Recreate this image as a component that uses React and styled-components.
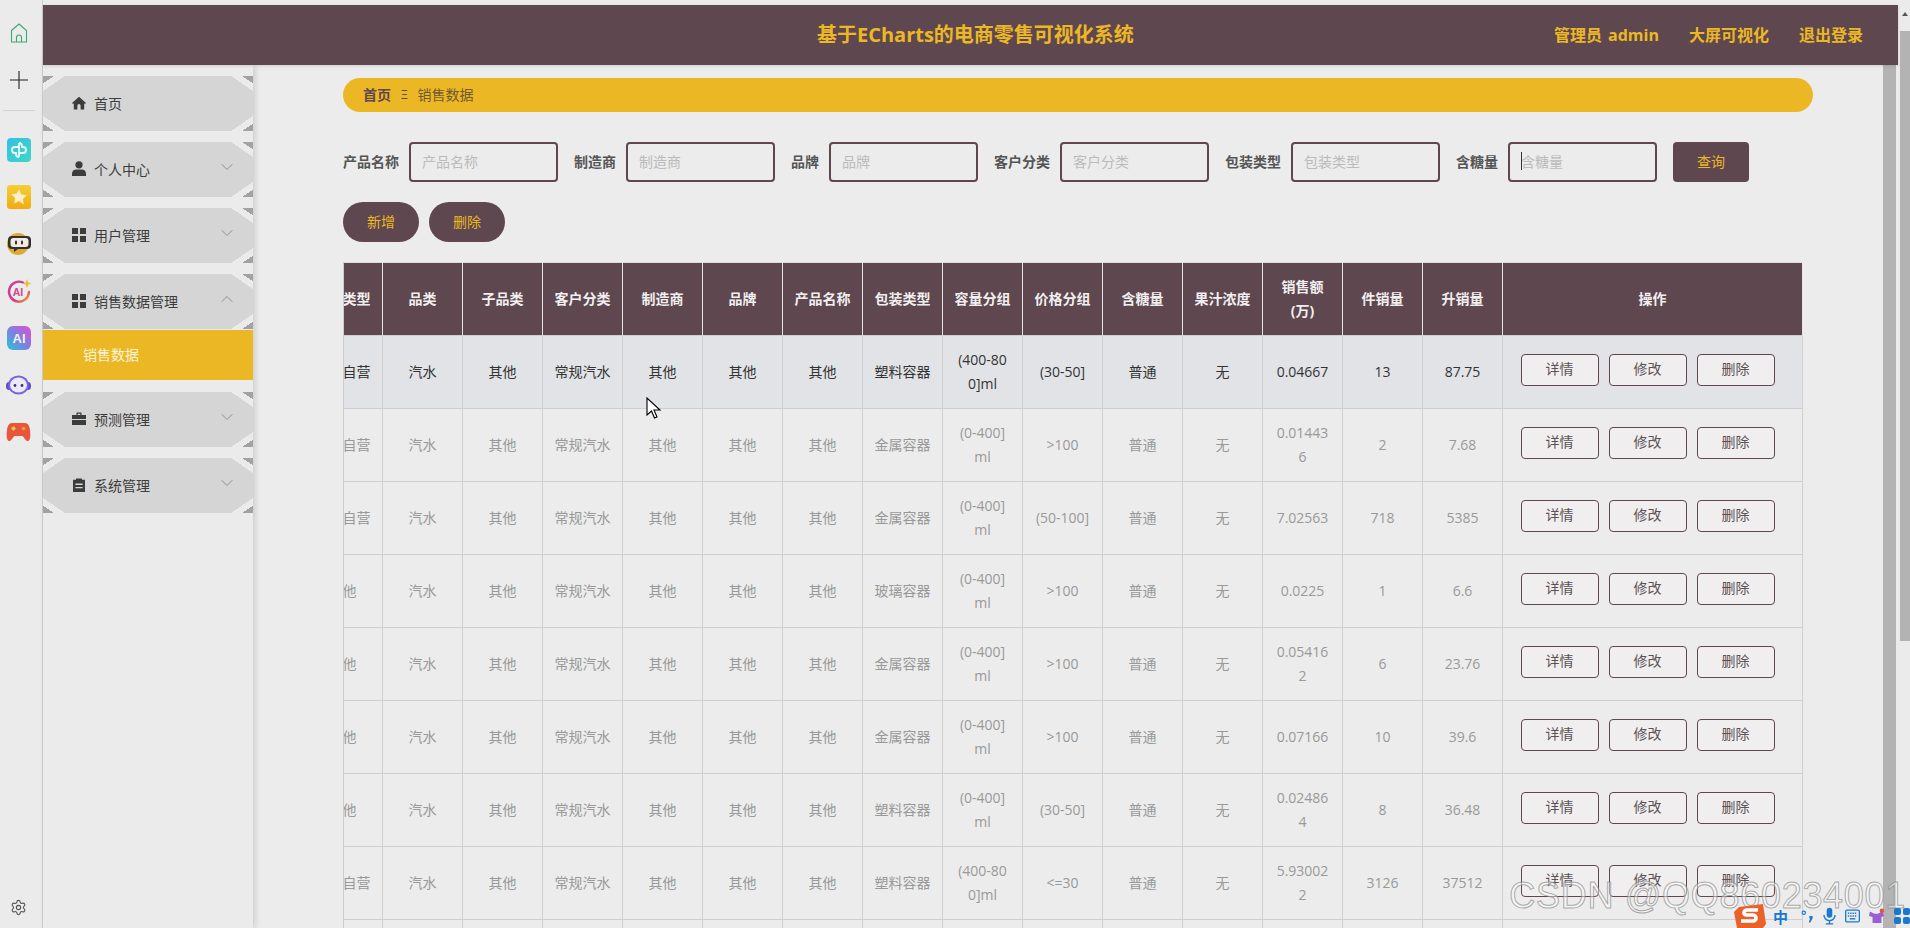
import React from 'react';
import styled, { createGlobalStyle } from 'styled-components';
import { ChevronDown, ChevronUp, Settings } from 'lucide-react';

const GlobalStyle = createGlobalStyle`
  html, body {
    margin: 0;
    height: 100%;
    overflow: hidden;
    background: #ebebeb;
    font-family: "Open Sans", "Noto Sans CJK SC", sans-serif;
    font-size: 14px;
  }
  * { box-sizing: border-box; }
`;

const BROWN = '#5e474f';
const YELLOW = '#ecb725';

const columns = ['渠道类型', '品类', '子品类', '客户分类', '制造商', '品牌', '产品名称', '包装类型', '容量分组', '价格分组', '含糖量', '果汁浓度', '销售额(万)', '件销量', '升销量'];

const rows = [
  ['线上自营', '塑料容器', '(400-800]ml', '(30-50]', '0.04667', '13', '87.75'],
  ['线上自营', '金属容器', '(0-400]ml', '>100', '0.014436', '2', '7.68'],
  ['线上自营', '金属容器', '(0-400]ml', '(50-100]', '7.02563', '718', '5385'],
  ['其他', '玻璃容器', '(0-400]ml', '>100', '0.0225', '1', '6.6'],
  ['其他', '金属容器', '(0-400]ml', '>100', '0.054162', '6', '23.76'],
  ['其他', '金属容器', '(0-400]ml', '>100', '0.07166', '10', '39.6'],
  ['其他', '塑料容器', '(0-400]ml', '(30-50]', '0.024864', '8', '36.48'],
  ['线上自营', '塑料容器', '(400-800]ml', '<=30', '5.930022', '3126', '37512'],
  ['线上自营', '塑料容器', '(0-400]ml', '>100', '0.0312', '4', '12.5'],
];

const fields = [
  { label: '产品名称' },
  { label: '制造商' },
  { label: '品牌' },
  { label: '客户分类' },
  { label: '包装类型' },
  { label: '含糖量', focused: true },
];

const HomeGlyph = () => (
  <svg width="14" height="14" viewBox="0 0 14 14" fill="#3c3c3c">
    <path d="M7 .8 14 7l-.9 1-.9-.7V13.600H8.600V9.600a1.600 1.600 0 0 0-3.200 0v4H1.800V7.300L.9 8 0 7z" />
  </svg>
);

const UserGlyph = () => (
  <svg width="14" height="15" viewBox="0 0 14 15" fill="#3c3c3c">
    <circle cx="7" cy="3.800" r="3.600" />
    <path d="M0 15v-2.600C0 10 2.200 8.600 4 8.600h6c1.800 0 4 1.400 4 3.800V15z" />
  </svg>
);

const GridGlyph = () => (
  <svg width="14" height="14" viewBox="0 0 14 14" fill="#3c3c3c">
    <rect width="6" height="6" />
    <rect x="8" width="6" height="6" />
    <rect y="8" width="6" height="6" />
    <rect x="8" y="8" width="6" height="6" />
  </svg>
);

const CaseGlyph = () => (
  <svg width="14" height="13" viewBox="0 0 14 13" fill="#3c3c3c">
    <path d="M4.500 3V.6h5V3H8.300V1.800H5.700V3z" />
    <path d="M0 3h14v4H0zM0 8h14v5H0z" />
  </svg>
);

const ClipGlyph = () => (
  <svg width="14" height="14" viewBox="0 0 14 14" fill="#3c3c3c">
    <path d="M1 1.800h3V.4h6v1.400h3V14H1zM3.400 5.600v1.300h7.200V5.600zM3.400 9v1.300h7.200V9z" fillRule="evenodd" />
  </svg>
);

const menu = [
  { label: '首页', icon: <HomeGlyph /> },
  { label: '个人中心', icon: <UserGlyph />, arrow: 'down' },
  { label: '用户管理', icon: <GridGlyph />, arrow: 'down' },
  { label: '销售数据管理', icon: <GridGlyph />, arrow: 'up', children: ['销售数据'] },
  { label: '预测管理', icon: <CaseGlyph />, arrow: 'down' },
  { label: '系统管理', icon: <ClipGlyph />, arrow: 'down' },
];

const appIcons = [
  (
    <svg width="24" height="24" viewBox="0 0 24 24">
      <defs>
        <linearGradient id="tealTile" x1="0" y1="0" x2="1" y2="1">
          <stop offset="0" stopColor="#35bfe6" />
          <stop offset="1" stopColor="#3fd6c6" />
        </linearGradient>
      </defs>
      <rect width="24" height="24" rx="4" fill="url(#tealTile)" />
      <path d="M12 5a3 3 0 0 1 3 3v1h1a3 3 0 0 1 0 6h-4M12 19a3 3 0 0 1-3-3v-1H8a3 3 0 0 1 0-6h4M12 5v14" fill="none" stroke="#fff" strokeWidth="1.800" opacity=".9" />
    </svg>
  ),
  (
    <svg width="24" height="24" viewBox="0 0 24 24">
      <defs>
        <linearGradient id="starTile" x1="0" y1="0" x2="0" y2="1">
          <stop offset="0" stopColor="#f3cf35" />
          <stop offset="1" stopColor="#f2ab12" />
        </linearGradient>
      </defs>
      <rect width="24" height="24" rx="3" fill="url(#starTile)" />
      <path d="m12 4.500 2.400 4.900 5.400.8-3.900 3.800.9 5.400L12 16l-4.800 2.400.9-5.400-3.900-3.800 5.400-.8z" fill="#fbeecb" />
    </svg>
  ),
  (
    <svg width="24" height="24" viewBox="0 0 24 24">
      <circle cx="11" cy="12" r="11" fill="#dcaa35" />
      <path d="M5 4h15a4 4 0 0 1 4 4v5a4 4 0 0 1-4 4h-9l-4 3v-3H5a4 4 0 0 1-4-4V8a4 4 0 0 1 4-4z" fill="#33302f" />
      <rect x="3.500" y="6" width="18" height="9" rx="3" fill="#f1ecdf" />
      <rect x="8" y="8.500" width="2" height="4" rx="1" fill="#33302f" />
      <rect x="14" y="8.500" width="2" height="4" rx="1" fill="#33302f" />
    </svg>
  ),
  (
    <svg width="26" height="26" viewBox="0 0 26 26">
      <defs>
        <linearGradient id="aiRing" x1="0" y1="0" x2="1" y2="1">
          <stop offset="0" stopColor="#c53f9f" />
          <stop offset=".6" stopColor="#d63e7e" />
          <stop offset="1" stopColor="#e6a52b" />
        </linearGradient>
      </defs>
      <path d="M17 4.500A10 10 0 1 0 23 14" fill="none" stroke="url(#aiRing)" strokeWidth="2.400" strokeLinecap="round" />
      <text x="12" y="18" fontSize="10.500" fontWeight="700" textAnchor="middle" fill="#d2478d" fontFamily="Liberation Sans, sans-serif">AI</text>
      <path d="m21 1 1.200 3.300L25.500 5.500l-3.300 1.200L21 10l-1.200-3.300-3.300-1.200 3.300-1.200z" fill="#eebd3a" />
    </svg>
  ),
  (
    <svg width="24" height="24" viewBox="0 0 24 24">
      <defs>
        <linearGradient id="aiTile" x1="1" y1="0" x2="0" y2="1">
          <stop offset="0" stopColor="#e64fcf" />
          <stop offset=".5" stopColor="#7f7fe0" />
          <stop offset="1" stopColor="#28c3d8" />
        </linearGradient>
      </defs>
      <rect width="24" height="24" rx="6" fill="url(#aiTile)" />
      <text x="12" y="17" fontSize="13" fontWeight="700" textAnchor="middle" fill="#eef3ff" fontFamily="Liberation Sans, sans-serif">AI</text>
    </svg>
  ),
  (
    <svg width="25" height="20" viewBox="0 0 25 20">
      <ellipse cx="3" cy="11" rx="3" ry="4" fill="#5a4bc9" />
      <ellipse cx="22" cy="11" rx="3" ry="4" fill="#5a4bc9" />
      <ellipse cx="12.500" cy="10" rx="10.500" ry="9.500" fill="#7a63e0" />
      <ellipse cx="12.500" cy="10" rx="8.500" ry="7.500" fill="#ece9fb" />
      <circle cx="9" cy="10.500" r="1.400" fill="#3a3466" />
      <circle cx="16" cy="10.500" r="1.400" fill="#3a3466" />
    </svg>
  ),
  (
    <svg width="25" height="20" viewBox="0 0 25 20">
      <path d="M6 1h13c3 0 4.500 3 5 7 .6 5 .6 10-1.800 11-2 .8-3.500-3-5.700-5H8.500c-2.200 2-3.700 5.800-5.700 5C.4 18 .4 13 1 8c.5-4 2-7 5-7z" fill="#e6553c" />
      <path d="M7.500 4.500v4M5.500 6.500h4" stroke="#f3c93f" strokeWidth="1.800" />
      <circle cx="17.500" cy="6.500" r="1.800" fill="#f0a13b" />
    </svg>
  ),
];

const App = () => (
  <Shell>
    <GlobalStyle />
    <Rail>
      <RailSlot>
        <svg width="18" height="20" viewBox="0 0 18 20" fill="none" stroke="#3aa974" strokeWidth="1.100">
          <path d="M1.500 7.500 9 1l7.500 6.500V19h-15z" />
          <path d="M6.500 19v-4.500a2.500 2.500 0 0 1 5 0V19" />
        </svg>
      </RailSlot>
      <RailSlot>
        <svg width="18" height="18" viewBox="0 0 18 18" stroke="#222" strokeWidth="1.100">
          <path d="M9 0v18M0 9h18" />
        </svg>
      </RailSlot>
      <RailLine />
      {appIcons.map((icon, i) => <RailSlot key={i}>{icon}</RailSlot>)}
      <RailBottom><Settings size={17} color="#555" strokeWidth={1.6} /></RailBottom>
    </Rail>

    <Window>
      <TopBar>
        <Title>基于ECharts的电商零售可视化系统</Title>
        <TopLinks>
          <span>管理员 admin</span>
          <span>大屏可视化</span>
          <span>退出登录</span>
        </TopLinks>
      </TopBar>

      <Body>
        <Sidebar>
          {menu.map((item) => (
            <React.Fragment key={item.label}>
              <MenuItem>
                <MenuIcon>{item.icon}</MenuIcon>
                <MenuLabel>{item.label}</MenuLabel>
                {item.arrow === 'down' && <MenuArrow><ChevronDown size={20} strokeWidth={0.9} /></MenuArrow>}
                {item.arrow === 'up' && <MenuArrow><ChevronUp size={20} strokeWidth={0.9} /></MenuArrow>}
              </MenuItem>
              {item.children && item.children.map((c) => <SubItem key={c}>{c}</SubItem>)}
            </React.Fragment>
          ))}
        </Sidebar>

        <Content>
          <Crumbs>
            <strong>首页</strong>
            <CrumbSep>Ξ</CrumbSep>
            <span>销售数据</span>
          </Crumbs>

          <SearchForm>
            {fields.map((f) => (
              <Field key={f.label}>
                <FieldLabel>{f.label}</FieldLabel>
                <InputWrap $focused={f.focused}>
                  <SearchInput placeholder={f.label} readOnly />
                </InputWrap>
              </Field>
            ))}
            <QueryBtn type="button">查询</QueryBtn>
          </SearchForm>

          <Actions>
            <PillBtn type="button">新增</PillBtn>
            <PillBtn type="button">删除</PillBtn>
          </Actions>

          <TableWrap>
            <DataTable>
              <colgroup>
                {columns.map((c) => <col key={c} width="80" />)}
                <col width="300" />
              </colgroup>
              <thead>
                <tr>
                  {columns.map((c) => <Th key={c}>{c}</Th>)}
                  <Th>操作</Th>
                </tr>
              </thead>
              <tbody>
                {rows.map((r, i) => (
                  <Row key={i} $hover={i === 0}>
                    <Td>{r[0]}</Td>
                    <Td>汽水</Td>
                    <Td>其他</Td>
                    <Td>常规汽水</Td>
                    <Td>其他</Td>
                    <Td>其他</Td>
                    <Td>其他</Td>
                    <Td>{r[1]}</Td>
                    <Td>{r[2]}</Td>
                    <Td>{r[3]}</Td>
                    <Td>普通</Td>
                    <Td>无</Td>
                    <Td>{r[4]}</Td>
                    <Td>{r[5]}</Td>
                    <Td>{r[6]}</Td>
                    <Td>
                      <RowActions>
                        <RowBtn type="button">详情</RowBtn>
                        <RowBtn type="button">修改</RowBtn>
                        <RowBtn type="button">删除</RowBtn>
                      </RowActions>
                    </Td>
                  </Row>
                ))}
              </tbody>
            </DataTable>
          </TableWrap>
        </Content>

        <InnerScroll />
      </Body>
    </Window>

    <OuterScroll>
      <ScrollArrow />
      <ScrollThumb />
    </OuterScroll>

    <Pointer width="16" height="24" viewBox="0 0 16 24">
      <path d="M1 1v17l4.500-4 3 7 2.500-1-3-7h6z" fill="#fff" stroke="#000" strokeWidth="1.100" />
    </Pointer>

    <Watermark>CSDN @QQ860234001</Watermark>

    <ImeBar>
      <ImeLogo width="32" height="24" viewBox="0 0 32 24">
        <path d="M5 3 29 0l3 20-3 4H3L0 8z" fill="#e9622a" />
        <path d="M24 6H13c-4 0-4 5 0 5h6c4 0 4 6 0 6H7" fill="none" stroke="#fff" strokeWidth="3.600" />
      </ImeLogo>
      <ImeChar>中</ImeChar>
      <svg width="13" height="14" viewBox="0 0 14 14" fill="#1b78d0">
        <circle cx="3" cy="3.500" r="1.800" fill="none" stroke="#1b78d0" strokeWidth="1.200" />
        <path d="M9 7h3.500v2.500L10 14H8.300l1.500-4.500H9z" />
      </svg>
      <svg width="13" height="18" viewBox="0 0 14 18" fill="#1b78d0">
        <rect x="4" width="6" height="11" rx="3" />
        <path d="M1 8a6 6 0 0 0 12 0M7 14v4M3 17.500h8" fill="none" stroke="#1b78d0" strokeWidth="1.500" />
      </svg>
      <svg width="15" height="14" viewBox="0 0 16 14">
        <rect x=".7" y=".7" width="14.600" height="12.600" rx="1.500" fill="none" stroke="#1b78d0" strokeWidth="1.400" />
        <path d="M3 4h10M3 7h10" stroke="#1b78d0" strokeWidth="1.500" strokeDasharray="1.500 1" />
        <path d="M5 10h6" stroke="#1b78d0" strokeWidth="1.500" />
      </svg>
      <svg width="16" height="18" viewBox="0 0 18 18">
        <path d="M1 4 6 6.500h4L15 4l2 5-3 1v7H4v-7L0 9z" fill="#9a5fd0" />
        <circle cx="14.500" cy="3" r="2.500" fill="#e8503f" />
      </svg>
      <svg width="16" height="16" viewBox="0 0 16 16" fill="#1b78d0">
        <rect width="7" height="7" rx="2" />
        <rect x="9" width="7" height="7" rx="2" />
        <rect y="9" width="7" height="7" rx="2" />
        <rect x="9" y="9" width="7" height="7" rx="2" />
      </svg>
    </ImeBar>
  </Shell>
);

const Shell = styled.div`
  position: relative;
  display: flex;
  width: 1910px;
  height: 928px;
  overflow: hidden;
  background: #ebebeb;
`;

const Rail = styled.aside`
  display: flex;
  flex-direction: column;
  align-items: center;
  flex: 0 0 43px;
  padding: 9.5px 5px 0 0;
  border-right: 1px solid #cfcfcf;
`;

const RailSlot = styled.div`
  display: flex;
  align-items: center;
  justify-content: center;
  flex: 0 0 47px;
  width: 37px;
`;

const RailLine = styled.div`
  flex: 0 0 1px;
  width: 32px;
  margin: 6px 0 16px;
  background: #d4d4d4;
`;

const RailBottom = styled.div`
  display: flex;
  margin-top: auto;
  padding-bottom: 12px;
`;

const Window = styled.div`
  display: flex;
  flex-direction: column;
  flex: 1;
  min-width: 0;
  padding-top: 5px;
`;

const TopBar = styled.header`
  position: relative;
  z-index: 2;
  display: flex;
  align-items: center;
  flex: 0 0 60px;
  padding: 0 35px 0 774px;
  background: ${BROWN};
  color: ${YELLOW};
  box-shadow: 0 1px 3px rgba(0, 0, 0, 0.12);
`;

const Title = styled.h1`
  margin: 0;
  font-size: 20px;
  font-weight: 700;
  line-height: 1;
`;

const TopLinks = styled.nav`
  display: flex;
  gap: 30px;
  margin-left: auto;
  padding-bottom: 2px;
  font-size: 16px;
  font-weight: 700;
  word-spacing: 2px;
`;

const Body = styled.div`
  display: flex;
  flex: 1;
  min-height: 0;
`;

const Sidebar = styled.nav`
  position: relative;
  z-index: 1;
  flex: 0 0 210px;
  padding-top: 11px;
  background: #ebebeb;
  box-shadow: 2px 0 6px rgba(0, 0, 0, 0.14);
`;

const MenuItem = styled.div`
  display: flex;
  align-items: center;
  height: 55px;
  margin-bottom: 11px;
  padding: 0 16px 2px 29px;
  color: #3c3c3c;
  background-color: #d5d5d5;
  background-image:
    linear-gradient(to bottom right, #a2a2a2 25%, #ebebeb 25% 50%, transparent 50%),
    linear-gradient(to bottom left, #a2a2a2 25%, #ebebeb 25% 50%, transparent 50%),
    linear-gradient(to top right, #a2a2a2 25%, #ebebeb 25% 50%, transparent 50%),
    linear-gradient(to top left, #a2a2a2 25%, #ebebeb 25% 50%, transparent 50%);
  background-size: 22px 15px;
  background-repeat: no-repeat;
  background-position: left top, right top, left bottom, right bottom;
`;

const MenuIcon = styled.span`
  display: flex;
  align-items: center;
  justify-content: center;
  width: 14px;
  margin-right: 8px;
`;

const MenuLabel = styled.span`
  flex: 1;
`;

const MenuArrow = styled.span`
  display: flex;
  margin-top: -4px;
  color: #777;
`;

const SubItem = styled.div`
  display: flex;
  align-items: center;
  height: 50px;
  margin: -10px 0 12px;
  padding: 0 0 2px 40px;
  background: ${YELLOW};
  color: #fdf4da;
`;

const Content = styled.main`
  flex: 1;
  min-width: 0;
  padding: 13px 70px 0 90px;
  overflow: hidden;
  background: #ececec;
`;

const Crumbs = styled.div`
  display: flex;
  align-items: center;
  height: 34px;
  padding: 0 0 2px 20px;
  border-radius: 17px;
  background: ${YELLOW};
  color: #6f5a32;
  strong { color: ${BROWN}; font-weight: 700; }
`;

const CrumbSep = styled.span`
  margin: 0 10px;
  color: ${BROWN};
  font-size: 12px;
`;

const SearchForm = styled.form`
  display: flex;
  align-items: center;
  gap: 16px;
  margin-top: 30px;
`;

const Field = styled.label`
  display: flex;
  align-items: center;
  gap: 10px;
`;

const FieldLabel = styled.span`
  padding-bottom: 2px;
  color: #555;
  font-weight: 700;
  white-space: nowrap;
`;

const InputWrap = styled.span`
  position: relative;
  display: block;
  &::after {
    content: '';
    display: ${(p) => (p.$focused ? 'block' : 'none')};
    position: absolute;
    left: 13px;
    top: 10px;
    width: 1px;
    height: 18px;
    background: #333;
  }
`;

const SearchInput = styled.input`
  display: block;
  width: 149px;
  height: 40px;
  padding: 0 11px 2px;
  border: 2px solid ${BROWN};
  border-radius: 4px;
  outline: none;
  background: transparent;
  font: inherit;
  &::placeholder { color: #bbb; }
`;

const QueryBtn = styled.button`
  width: 76px;
  height: 40px;
  padding: 0 0 2px;
  border: 0;
  border-radius: 4px;
  background: ${BROWN};
  color: ${YELLOW};
  font: inherit;
`;

const Actions = styled.div`
  display: flex;
  gap: 10px;
  margin-top: 20px;
`;

const PillBtn = styled.button`
  width: 76px;
  height: 40px;
  padding: 0 0 2px;
  border: 0;
  border-radius: 20px;
  background: ${BROWN};
  color: ${YELLOW};
  font: inherit;
`;

const TableWrap = styled.div`
  width: 1461px;
  margin-top: 20px;
  overflow: hidden;
  border-left: 1px solid #ccc;
`;

const DataTable = styled.table`
  width: 1500px;
  margin-left: -42px;
  table-layout: fixed;
  border-collapse: collapse;
`;

const Th = styled.th`
  height: 73px;
  padding: 12px 11.5px;
  border: 1px solid #e8e4e4;
  border-top-color: #dcdcdc;
  border-bottom: 0;
  background: ${BROWN};
  color: #f1efef;
  font-weight: 700;
  line-height: 24px;
  text-align: center;
  word-break: break-all;
`;

const Row = styled.tr`
  height: 73px;
  background: ${(p) => (p.$hover ? '#e1e3e6' : 'transparent')};
  color: ${(p) => (p.$hover ? '#333' : '#999')};
`;

const Td = styled.td`
  padding: 12px 11.5px;
  border: 1px solid #cfcfcf;
  line-height: 24px;
  text-align: center;
  word-break: break-all;
`;

const RowActions = styled.div`
  display: flex;
  gap: 10px;
  margin-top: -4px;
  padding-left: 6px;
`;

const RowBtn = styled.button`
  flex: 0 0 78px;
  height: 32px;
  padding: 0 0 2px;
  border: 1px solid ${BROWN};
  border-radius: 4px;
  background: #f0eeee;
  color: #5c5256;
  font: inherit;
`;

const InnerScroll = styled.div`
  flex: 0 0 13px;
  margin-right: 2px;
  background: #b3b3b3;
`;

const OuterScroll = styled.div`
  display: flex;
  flex-direction: column;
  align-items: center;
  flex: 0 0 12px;
  padding-left: 2px;
`;

const ScrollArrow = styled.div`
  width: 0;
  height: 0;
  margin-top: 12px;
  border-left: 3.5px solid transparent;
  border-right: 3.5px solid transparent;
  border-bottom: 4px solid #555;
`;

const ScrollThumb = styled.div`
  width: 10px;
  height: 610px;
  margin-top: 15px;
  background: #b3b3b3;
`;

const Pointer = styled.svg`
  position: absolute;
  left: 646px;
  top: 397px;
  z-index: 5;
`;

const Watermark = styled.div`
  position: absolute;
  right: 4px;
  bottom: 14px;
  z-index: 6;
  color: rgba(255, 255, 255, 0.45);
  -webkit-text-stroke: 1px rgba(135, 135, 135, 0.7);
  font-family: "Liberation Sans", sans-serif;
  font-size: 36px;
  letter-spacing: 0.7px;
  line-height: 1;
  white-space: nowrap;
`;

const ImeBar = styled.div`
  position: absolute;
  right: 0;
  bottom: 0;
  z-index: 7;
  display: flex;
  align-items: center;
  gap: 9px;
  height: 24px;
`;

const ImeLogo = styled.svg`
  margin-right: -2px;
`;

const ImeChar = styled.span`
  margin-right: 4px;
  color: #1b78d0;
  font-family: "Noto Sans CJK SC", sans-serif;
  font-size: 15px;
  font-weight: 700;
`;

export default App;
